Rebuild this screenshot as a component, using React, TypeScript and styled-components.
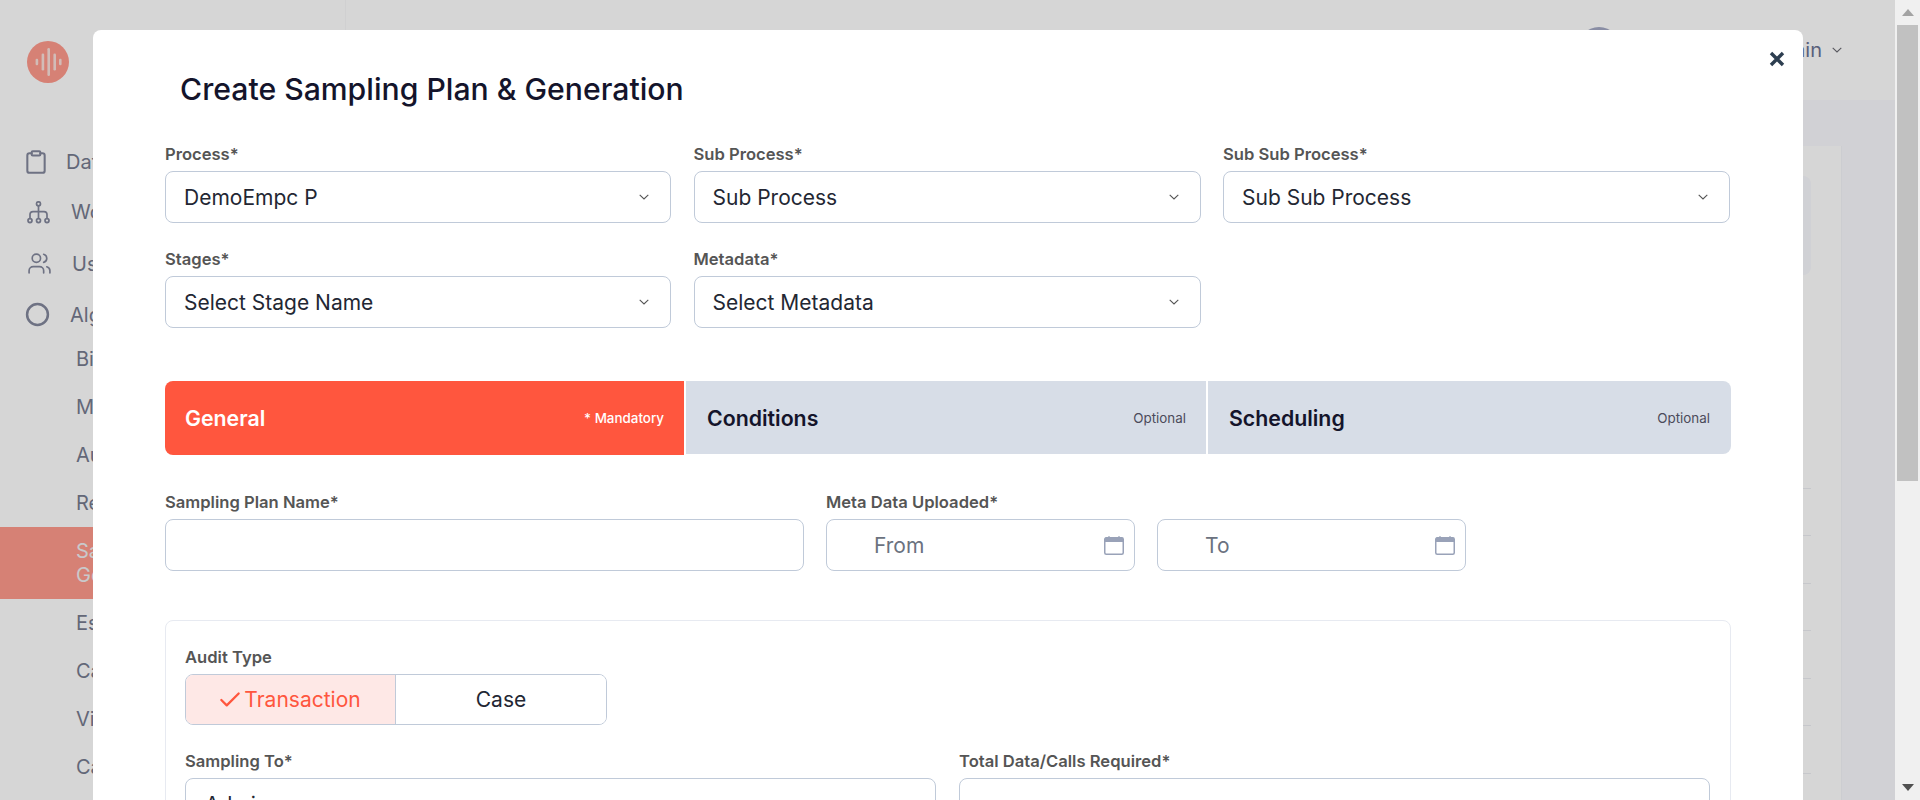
import React from "react";
import styled, { createGlobalStyle } from "styled-components";
import { Clipboard, Users, Circle, Check } from "lucide-react";

const Global = createGlobalStyle`
  html, body { margin: 0; padding: 0; height: 800px; overflow: hidden; background: #fff; }
  body { font-family: Inter, "Noto Sans", sans-serif; }
  * { box-sizing: border-box; }
`;

const Shell = styled.div`
  display: flex;
  width: 1920px;
  height: 800px;
  overflow: hidden;
`;
const Frame = styled.div`
  position: relative;
  display: flex;
  width: 1895px;
  height: 800px;
  overflow: hidden;
  background: #fff;
`;

/* page behind the dialog */
const Sidebar = styled.aside`
  flex: 0 0 346px;
  border-right: 1px solid #f8f8f9;
  background: #fff;
`;
const LogoWrap = styled.div`
  height: 100px;
  padding: 41px 0 0 27px;
`;
const Nav = styled.nav`
  display: flex;
  flex-direction: column;
  padding-top: 38px;
`;
const NavRow = styled.div<{ $h: number }>`
  display: flex;
  align-items: center;
  height: ${(p) => p.$h}px;
  padding-left: 27px;
  color: #84889d;
`;
const NavText = styled.span<{ $gap: number }>`
  margin-left: ${(p) => p.$gap}px;
  font-size: 20px;
  line-height: 24px;
  color: #767b8f;
`;
const SubNav = styled.div`
  display: flex;
  flex-direction: column;
  margin-top: -5px;
`;
const SubRow = styled.div<{ $active?: boolean }>`
  display: flex;
  align-items: center;
  height: ${(p) => (p.$active ? 72 : 48)}px;
  padding-left: 76px;
  font-size: 20px;
  line-height: 24px;
  color: ${(p) => (p.$active ? "#f0f0f2" : "#767b8f")};
  background: ${(p) => (p.$active ? "#ff9a8c" : "transparent")};
`;
const Main = styled.main`
  flex: 1;
  display: flex;
  flex-direction: column;
  min-width: 0;
`;
const TopBar = styled.header`
  flex: 0 0 100px;
  display: flex;
  align-items: flex-start;
  justify-content: flex-end;
  background: #fff;
  padding: 27px 53px 0 0;
`;
const Avatar = styled.div`
  width: 44px;
  height: 44px;
  border-radius: 50%;
  background: #a4a9c4;
  margin-right: 141px;
`;
const UserName = styled.span`
  margin-top: 11px;
  font-size: 20px;
  line-height: 24px;
  color: #6b7394;
`;
const UserChevron = styled.span`
  display: flex;
  margin: 20px 0 0 10px;
  color: #6a6a72;
`;
const Content = styled.div`
  flex: 1;
  background: #f9fafe;
  padding: 46px 53px 0 0;
`;
const Card = styled.section`
  height: 700px;
  background: #fff;
  border-right: 1px solid #f4f5f9;
  padding: 30px 30px 0 0;
`;
const Summary = styled.div`
  height: 99px;
  background: #f8f9fe;
  border-radius: 8px;
`;
const Rows = styled.div`
  margin-top: 166px;
`;
const TableRow = styled.div`
  height: 47.5px;
  border-bottom: 1px solid #eceef2;
`;

/* dialog */
const Backdrop = styled.div`
  position: absolute;
  inset: 0;
  background: rgba(0, 0, 0, 0.16);
  overflow: hidden;
  padding: 30px 0 0 93px;
`;
const Dialog = styled.div`
  position: relative;
  width: 1710px;
  height: 900px;
  background: #fff;
  border-radius: 8px;
  padding: 39px 72px 0;
`;
const Close = styled.button`
  position: absolute;
  top: 21px;
  right: 18px;
  display: flex;
  width: 16px;
  height: 16px;
  padding: 0;
  border: 0;
  background: none;
`;
const Title = styled.h1`
  margin: 0 0 36px;
  padding-left: 15px;
  font-size: 30.2px;
  line-height: 40px;
  font-weight: 500;
  color: #14142b;
`;
const SelectGrid = styled.div`
  display: grid;
  grid-template-columns: 506px 507px 507px;
  column-gap: 22.5px;
  row-gap: 27px;
`;
const Field = styled.div`
  display: flex;
  flex-direction: column;
  min-width: 0;
`;
const Label = styled.label`
  font-size: 16.6px;
  line-height: 18px;
  font-weight: 600;
  color: #555555;
  margin-bottom: 8px;
`;
const Control = styled.div<{ $h?: number }>`
  display: flex;
  align-items: center;
  justify-content: space-between;
  height: ${(p) => p.$h ?? 52}px;
  padding: 2px 21px 0 18px;
  border: 1px solid #c0cad9;
  border-radius: 8px;
  background: #fff;
  font-size: 21px;
  line-height: 24px;
  color: #232733;
  svg {
    margin-top: -2px;
  }
`;
const SelectChevron = styled.span`
  display: flex;
  color: #555;
`;
const Tabs = styled.div`
  display: grid;
  grid-template-columns: 519px 520px 1fr;
  column-gap: 2px;
  margin-top: 53px;
`;
const Tab = styled.div<{ $active?: boolean; $first?: boolean; $last?: boolean }>`
  display: flex;
  align-items: center;
  justify-content: space-between;
  height: ${(p) => (p.$active ? 74 : 73)}px;
  padding: 0 ${(p) => (p.$last ? 21 : 20)}px 0 ${(p) => (p.$active ? 20 : 21)}px;
  background: ${(p) => (p.$active ? "#ff563e" : "#d7dde7")};
  color: ${(p) => (p.$active ? "#fff" : "#14142b")};
  border-radius: ${(p) => (p.$first ? "8px 0 0 8px" : p.$last ? "0 8px 8px 0" : "0")};
`;
const TabName = styled.span`
  font-size: 21.3px;
  line-height: 24px;
  font-weight: 600;
`;
const TabNote = styled.span<{ $active?: boolean }>`
  font-size: 13.4px;
  line-height: 16px;
  font-weight: ${(p) => (p.$active ? 500 : 400)};
  color: ${(p) => (p.$active ? "#fff" : "#4b4b5a")};
`;
const PlanRow = styled.div`
  display: grid;
  grid-template-columns: 639px 309px 309px;
  column-gap: 22px;
  margin-top: 38px;
`;
const DateGroup = styled.div`
  grid-column: 2 / span 2;
  display: grid;
  grid-template-columns: 309px 309px;
  column-gap: 22px;
`;
const Spacer = styled.span`
  display: block;
  height: 18px;
  margin-bottom: 8px;
`;
const DateControl = styled(Control)`
  padding: 2px 10px 0 47px;
  color: #6b7280;
`;
const Panel = styled.section`
  margin-top: 49px;
  padding: 27px 20px 0 19px;
  border: 1px solid #e7eaf1;
  border-radius: 8px;
  height: 400px;
`;
const Toggle = styled.div`
  display: grid;
  grid-template-columns: 210px 1fr;
  width: 422px;
  height: 51px;
  border: 1px solid #c0cad9;
  border-radius: 8px;
  overflow: hidden;
`;
const ToggleItem = styled.div<{ $active?: boolean }>`
  display: flex;
  align-items: center;
  justify-content: center;
  gap: 1.5px;
  padding-right: ${(p) => (p.$active ? 3.5 : 0)}px;
  font-size: 21px;
  line-height: 24px;
  background: ${(p) => (p.$active ? "#fee8e6" : "#fff")};
  color: ${(p) => (p.$active ? "#ff563e" : "#232733")};
  border-right: ${(p) => (p.$active ? "1px solid #c0cad9" : "0")};
`;
const SamplingRow = styled.div`
  display: grid;
  grid-template-columns: 751px 1fr;
  column-gap: 23px;
  margin-top: 27px;
`;
const SamplingValue = styled(Control)`
  padding: 2px 21px 0 19px;
`;

/* scrollbar */
const Scrollbar = styled.div`
  flex: 0 0 25px;
  display: flex;
  flex-direction: column;
  align-items: center;
  background: #f0f0f0;
`;
const ScrollArrow = styled.div`
  flex: 0 0 25px;
  display: flex;
  align-items: center;
  justify-content: center;
`;
const ScrollThumb = styled.div`
  flex: 0 0 456px;
  width: 21px;
  background: #c1c1c1;
`;
const ScrollGap = styled.div`
  flex: 1;
`;

const Logo = () => (
  <svg width="42" height="42" viewBox="0 0 42 42" aria-hidden>
    <circle cx="21" cy="21" r="21" fill="#ff9a8c" />
    <g fill="#fbe0da">
      <rect x="8.6" y="17.7" width="2.6" height="6.6" rx="1.2" />
      <rect x="14.6" y="12.5" width="2.6" height="17" rx="1.2" />
      <rect x="20.4" y="7" width="2.6" height="28" rx="1.2" />
      <rect x="26.4" y="12.5" width="2.6" height="17" rx="1.2" />
      <rect x="32" y="17.7" width="2.6" height="6.6" rx="1.2" />
    </g>
  </svg>
);

const NetworkIcon = () => (
  <svg width="23" height="23" viewBox="0 0 23 23" fill="none" stroke="currentColor" strokeWidth="1.7" aria-hidden>
    <circle cx="11.5" cy="2.8" r="2" />
    <path d="M11.5 4.8V17.5M3 17.5V13.6a3 3 0 0 1 3-3h11a3 3 0 0 1 3 3v3.9" />
    <circle cx="3" cy="19.6" r="2" />
    <circle cx="11.5" cy="19.6" r="2" />
    <circle cx="20" cy="19.6" r="2" />
  </svg>
);

const Chevron = () => (
  <svg width="10" height="6" viewBox="0 0 10 6" fill="none" stroke="currentColor" strokeWidth="1.1" aria-hidden>
    <path d="M0.7 0.8 5 5 9.3 0.8" />
  </svg>
);

const CalendarIcon = () => (
  <svg width="20" height="19" viewBox="0 0 20 19" fill="none" aria-hidden>
    <rect x="0.75" y="1.75" width="18.5" height="16.5" rx="1.5" stroke="#99a2b8" strokeWidth="1.5" />
    <path d="M1 3a2 2 0 0 1 2-2h14a2 2 0 0 1 2 2v3H1z" fill="#99a2b8" />
    <path d="M5 0v2M15 0v2" stroke="#99a2b8" strokeWidth="1.2" />
  </svg>
);

const SelectBox = ({ value }: { value: string }) => (
  <Control>
    <span>{value}</span>
    <SelectChevron>
      <Chevron />
    </SelectChevron>
  </Control>
);

const subItems = ["Bias", "Metrics", "Audit", "Reports"];
const subItemsAfter = ["Escalation", "Calls", "Views", "Calibration"];

export default function App() {
  return (
    <Shell>
      <Global />
      <Frame>
        <Sidebar>
          <LogoWrap>
            <Logo />
          </LogoWrap>
          <Nav>
            <NavRow $h={48}>
              <Clipboard size={26} strokeWidth={1.9} style={{ marginLeft: -4 }} />
              <NavText $gap={17}>Data</NavText>
            </NavRow>
            <NavRow $h={52}>
              <NetworkIcon />
              <NavText $gap={21}>Workflow</NavText>
            </NavRow>
            <NavRow $h={51}>
              <Users size={25} strokeWidth={1.6} />
              <NavText $gap={20}>Users</NavText>
            </NavRow>
            <NavRow $h={51}>
              <Circle size={25} strokeWidth={2.4} style={{ marginLeft: -2 }} />
              <NavText $gap={20}>Algorithm</NavText>
            </NavRow>
          </Nav>
          <SubNav>
            {subItems.map((s) => (
              <SubRow key={s}>{s}</SubRow>
            ))}
            <SubRow $active>
              Sampling
              <br />
              Generation
            </SubRow>
            {subItemsAfter.map((s) => (
              <SubRow key={s}>{s}</SubRow>
            ))}
          </SubNav>
        </Sidebar>
        <Main>
          <TopBar>
            <Avatar />
            <UserName>Admin</UserName>
            <UserChevron>
              <Chevron />
            </UserChevron>
          </TopBar>
          <Content>
            <Card>
              <Summary />
              <Rows>
                {[0, 1, 2, 3, 4, 5, 6].map((r) => (
                  <TableRow key={r} />
                ))}
              </Rows>
            </Card>
          </Content>
        </Main>
        <Backdrop>
          <Dialog>
            <Close aria-label="Close">
              <svg width="16" height="16" viewBox="0 0 16 16" aria-hidden>
                <path d="M2 2 14 14M14 2 2 14" stroke="#2d3e50" strokeWidth="3.4" />
              </svg>
            </Close>
            <Title>Create Sampling Plan &amp; Generation</Title>
            <SelectGrid>
              <Field>
                <Label>Process*</Label>
                <SelectBox value="DemoEmpc P" />
              </Field>
              <Field>
                <Label>Sub Process*</Label>
                <SelectBox value="Sub Process" />
              </Field>
              <Field>
                <Label>Sub Sub Process*</Label>
                <SelectBox value="Sub Sub Process" />
              </Field>
              <Field>
                <Label>Stages*</Label>
                <SelectBox value="Select Stage Name" />
              </Field>
              <Field>
                <Label>Metadata*</Label>
                <SelectBox value="Select Metadata" />
              </Field>
            </SelectGrid>
            <Tabs>
              <Tab $active $first>
                <TabName>General</TabName>
                <TabNote $active>* Mandatory</TabNote>
              </Tab>
              <Tab>
                <TabName>Conditions</TabName>
                <TabNote>Optional</TabNote>
              </Tab>
              <Tab $last>
                <TabName>Scheduling</TabName>
                <TabNote>Optional</TabNote>
              </Tab>
            </Tabs>
            <PlanRow>
              <Field>
                <Label>Sampling Plan Name*</Label>
                <Control />
              </Field>
              <DateGroup>
                <Field>
                  <Label>Meta Data Uploaded*</Label>
                  <DateControl>
                    <span>From</span>
                    <CalendarIcon />
                  </DateControl>
                </Field>
                <Field>
                  <Spacer />
                  <DateControl>
                    <span>To</span>
                    <CalendarIcon />
                  </DateControl>
                </Field>
              </DateGroup>
            </PlanRow>
            <Panel>
              <Field>
                <Label>Audit Type</Label>
                <Toggle>
                  <ToggleItem $active>
                    <Check size={26} strokeWidth={2.1} />
                    Transaction
                  </ToggleItem>
                  <ToggleItem>Case</ToggleItem>
                </Toggle>
              </Field>
              <SamplingRow>
                <Field>
                  <Label>Sampling To*</Label>
                  <SamplingValue>
                    <span>Admin</span>
                    <SelectChevron>
                      <Chevron />
                    </SelectChevron>
                  </SamplingValue>
                </Field>
                <Field>
                  <Label>Total Data/Calls Required*</Label>
                  <Control />
                </Field>
              </SamplingRow>
            </Panel>
          </Dialog>
        </Backdrop>
      </Frame>
      <Scrollbar>
        <ScrollArrow>
          <svg width="12" height="7" viewBox="0 0 12 7" aria-hidden>
            <path d="M6 0 12 7H0z" fill="#a3a3a3" />
          </svg>
        </ScrollArrow>
        <ScrollThumb />
        <ScrollGap />
        <ScrollArrow>
          <svg width="12" height="7" viewBox="0 0 12 7" aria-hidden>
            <path d="M0 0H12L6 7z" fill="#505050" />
          </svg>
        </ScrollArrow>
      </Scrollbar>
    </Shell>
  );
}
